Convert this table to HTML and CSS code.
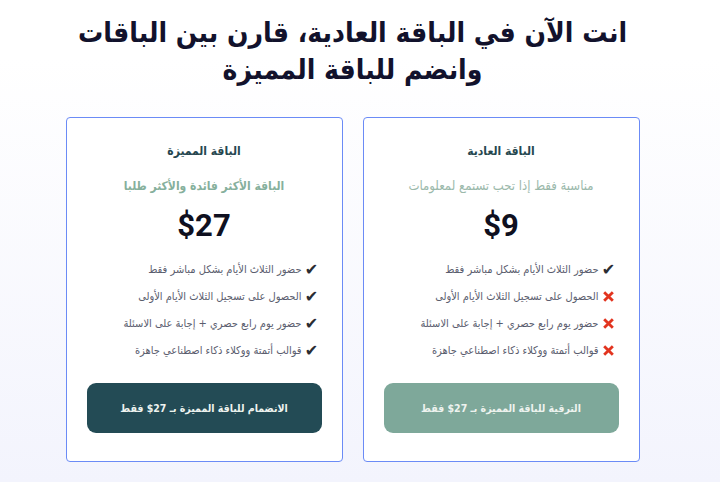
FILE: index.html
```html
<!DOCTYPE html>
<html lang="ar" dir="rtl">
<head>
<meta charset="utf-8">
<link rel="stylesheet" href="styles.css">
</head>
<body>
<div class="page">
  <h1 class="headline">انت الآن في الباقة العادية، قارن بين الباقات<br>وانضم للباقة المميزة</h1>
  <div class="plans">
    <div class="card">
      <div class="card-title">الباقة العادية</div>
      <div class="card-sub">مناسبة فقط إذا تحب تستمع لمعلومات</div>
      <div class="price">$9</div>
      <ul class="features">
        <li><span class="ico check">✔</span><span>حضور الثلاث الأيام بشكل مباشر فقط</span></li>
        <li><span class="ico"><svg class="x" viewBox="0 0 12 12"><path d="M2 2L10 10M10 2L2 10"/></svg></span><span>الحصول على تسجيل الثلاث الأيام الأولى</span></li>
        <li><span class="ico"><svg class="x" viewBox="0 0 12 12"><path d="M2 2L10 10M10 2L2 10"/></svg></span><span>حضور يوم رابع حصري + إجابة على الاسئلة</span></li>
        <li><span class="ico"><svg class="x" viewBox="0 0 12 12"><path d="M2 2L10 10M10 2L2 10"/></svg></span><span>قوالب أتمتة ووكلاء ذكاء اصطناعي جاهزة</span></li>
      </ul>
      <button class="btn btn-light">الترقية للباقة المميزة بـ 27$ فقط</button>
    </div>
    <div class="card">
      <div class="card-title">الباقة المميزة</div>
      <div class="card-sub card-sub-strong">الباقة الأكثر فائدة والأكثر طلبا</div>
      <div class="price">$27</div>
      <ul class="features">
        <li><span class="ico check">✔</span><span>حضور الثلاث الأيام بشكل مباشر فقط</span></li>
        <li><span class="ico check">✔</span><span>الحصول على تسجيل الثلاث الأيام الأولى</span></li>
        <li><span class="ico check">✔</span><span>حضور يوم رابع حصري + إجابة على الاسئلة</span></li>
        <li><span class="ico check">✔</span><span>قوالب أتمتة ووكلاء ذكاء اصطناعي جاهزة</span></li>
      </ul>
      <button class="btn btn-dark">الانضمام للباقة المميزة بـ 27$ فقط</button>
    </div>
  </div>
</div>
</body>
</html>
```

FILE: styles.css
```css
html, body {
  margin: 0;
  padding: 0;
}
body {
  width: 720px;
  height: 482px;
  overflow: hidden;
  background: linear-gradient(180deg, #ffffff 0%, #ffffff 12%, #f3f4fd 100%);
  font-family: "DejaVu Sans Condensed", "DejaVu Sans", sans-serif;
}
.page {
  width: 705px;
  margin-left: 0;
  margin-right: auto;
  padding-top: 14px;
  display: flex;
  flex-direction: column;
  align-items: center;
}
.headline {
  margin: 0;
  font-size: 28px;
  line-height: 37px;
  font-weight: 700;
  color: #12122c;
  text-align: center;
}
.plans {
  margin-top: 29px;
  display: flex;
  gap: 20px;
}
.card {
  width: 277px;
  box-sizing: border-box;
  background: #fff;
  border: 1px solid #6b8bf6;
  border-radius: 4px;
  padding: 23px 20px 28px;
  display: flex;
  flex-direction: column;
  align-items: center;
}
.card-title {
  font-size: 12px;
  line-height: 20px;
  font-weight: 700;
  color: #26474f;
}
.card-sub {
  margin-top: 15px;
  font-size: 13px;
  line-height: 20px;
  color: #9bb9ab;
}
.card-sub-strong {
  font-size: 12px;
  font-weight: 700;
  color: #86b09c;
}
.price {
  margin-top: 12px;
  font-family: Roboto, "Liberation Sans", sans-serif;
  font-size: 31px;
  line-height: 36px;
  font-weight: 700;
  color: #0f1020;
  direction: ltr;
}
.features {
  list-style: none;
  margin: 12px 0 0;
  padding: 0 3px 0 0;
  align-self: stretch;
}
.features li {
  height: 27px;
  display: flex;
  align-items: center;
  gap: 3px;
  font-size: 11px;
  color: #5a5d6e;
}
.ico {
  width: 14px;
  display: inline-flex;
  justify-content: center;
}
.check {
  font-family: "DejaVu Sans", sans-serif;
  font-size: 16px;
  color: #2b2d33;
}
.x {
  width: 13px;
  height: 13px;
  stroke: #e2341f;
  stroke-width: 2.6;
  fill: none;
}
.btn {
  margin-top: 19px;
  width: 235px;
  height: 50px;
  border: none;
  border-radius: 9px;
  font-family: inherit;
  font-size: 10.5px;
  font-weight: 700;
  color: #eef3ef;
  cursor: pointer;
}
.btn-light {
  background: #7ea89a;
}
.btn-dark {
  background: #234b55;
}
```
